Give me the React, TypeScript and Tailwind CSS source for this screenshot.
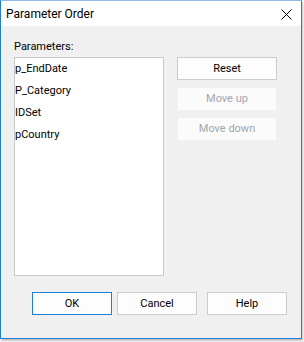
import React from "react";

export default function App() {
  const items = ["p_EndDate", "P_Category", "IDSet", "pCountry"];
  return (
    <div className="w-[304px] h-[342px] bg-white font-['Roboto',sans-serif]">
      <div className="w-[302px] h-[339px] border border-[#1a7fd6] border-t-[#8fbce8] bg-[#f0f0f0] flex flex-col shadow-[1px_2px_2px_rgba(0,0,0,0.25)] text-[11px] leading-[16px] text-black">
        <div className="h-[25px] bg-white flex items-center justify-between pl-[5px] pr-[9px] shrink-0">
          <span className="text-[12px]">Parameter Order</span>
          <svg width="11" height="11" viewBox="0 0 11 11" className="mt-[1px]">
            <path d="M0.5 0.5 L10.5 10.5 M10.5 0.5 L0.5 10.5" stroke="#000" strokeWidth="1" />
          </svg>
        </div>
        <div className="flex-1 flex flex-col pl-[13px] pt-[13px]">
          <div className="h-[16px] mb-[2px]">Parameters:</div>
          <div className="flex gap-[13px]">
            <div className="w-[150px] h-[219px] bg-white border border-[#c9c9c9]">
              {items.map((t) => (
                <div key={t} className="h-[22px] flex items-center">
                  {t}
                </div>
              ))}
            </div>
            <div className="flex flex-col w-[100px] gap-[8px]">
              <button className="h-[23px] w-[100px] bg-[#fdfdfd] border border-[#cccccc] flex items-center justify-center text-black">
                Reset
              </button>
              <button className="h-[22px] w-[98px] ml-[1px] bg-[#fbfbfb] flex items-center justify-center text-[#a0a6b0]">
                Move up
              </button>
              <button className="h-[22px] w-[98px] ml-[1px] bg-[#fbfbfb] flex items-center justify-center text-[#a0a6b0]">
                Move down
              </button>
            </div>
          </div>
          <div className="flex mt-[16px] pl-[18px]">
            <button className="h-[23px] w-[80px] bg-[#fdfdfd] border border-[#1a7fd6] flex items-center justify-center">
              OK
            </button>
            <button className="h-[23px] w-[80px] ml-[5px] bg-[#fdfdfd] border border-[#cccccc] flex items-center justify-center">
              Cancel
            </button>
            <button className="h-[23px] w-[80px] ml-[10px] bg-[#fdfdfd] border border-[#cccccc] flex items-center justify-center">
              Help
            </button>
          </div>
        </div>
      </div>
    </div>
  );
}
